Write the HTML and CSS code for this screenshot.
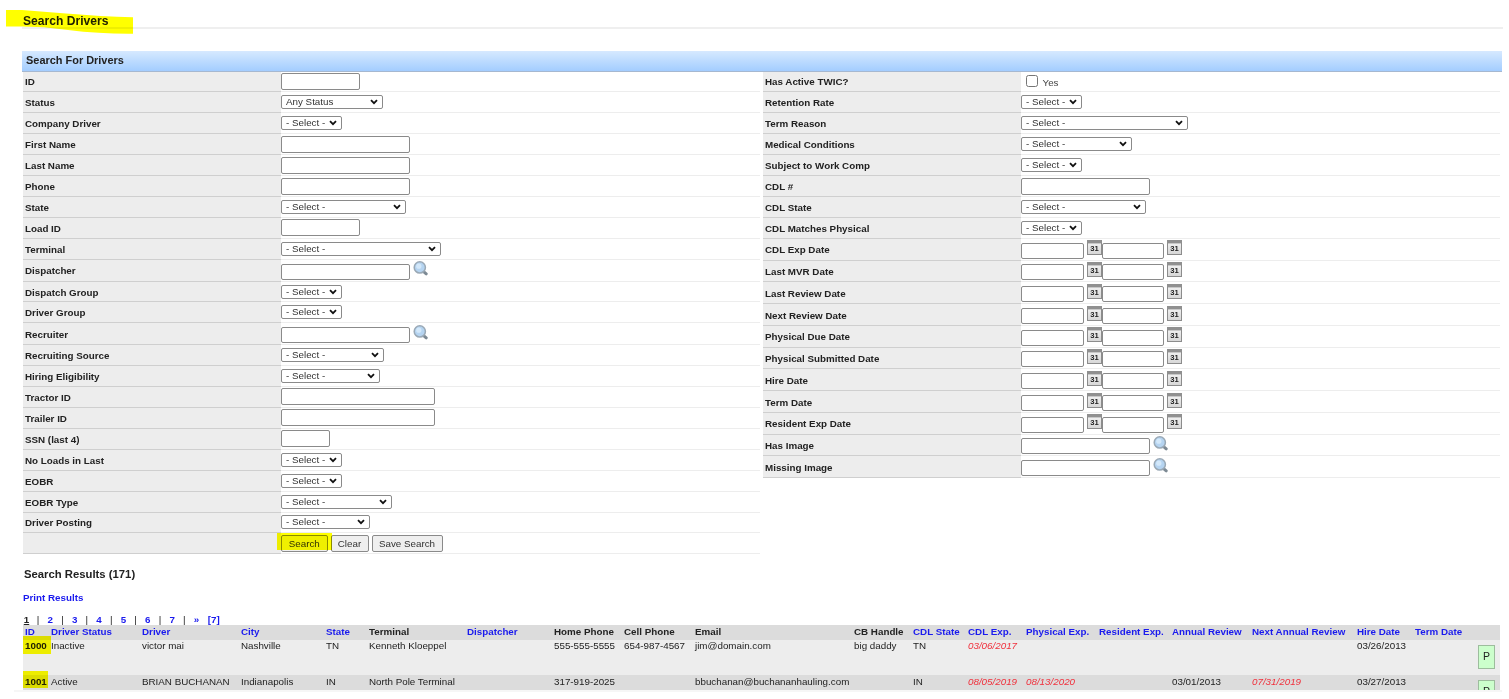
FILE: index.html
```
<!DOCTYPE html>
<html lang="en">
<head>
  <meta charset="UTF-8">
  <meta name="viewport" content="width=device-width, initial-scale=1.0">
  <title>Search Drivers</title>
  <link rel="stylesheet" href="styles.css">
</head>
<body>
  <svg class="defs" width="0" height="0">
    <defs>
      <linearGradient id="calFill" x1="0" y1="0" x2="0" y2="1">
        <stop offset="0" stop-color="#f6f6f6"/>
        <stop offset="1" stop-color="#d6d6d6"/>
      </linearGradient>
      <symbol id="lens" viewBox="0 0 15 15">
        <path d="M10.600 10.600L13.200 12.800" stroke="#7d8a94" stroke-width="3" stroke-linecap="round"/>
        <circle cx="6.800" cy="6.400" r="5.600" fill="#b5d4f1" stroke="#9aa9b6" stroke-width="1.500"/>
        <circle cx="5.800" cy="5.200" r="2.600" fill="#d3e8fa"/>
      </symbol>
      <symbol id="cal" viewBox="0 0 15 15">
        <rect x="0.5" y="0.5" width="14" height="14" fill="url(#calFill)" stroke="#8c8c8c"/>
        <rect x="0" y="0" width="15" height="3.4" fill="#909090"/>
        <text class="day" x="7.5" y="10.600" text-anchor="middle" textLength="8.500" lengthAdjust="spacingAndGlyphs">31</text>
      </symbol>
    </defs>
  </svg>

  <div class="page">
    <div class="title">
      <h1>Search Drivers</h1>
      <svg class="mark mark-title" width="128" height="26" viewBox="0 0 128 26">
        <path d="M0 0H16L60 3.5Q95 6.500 127 7.300V23.700Q95 24 62 20L38 17.300L16 16.500H0Z" fill="#ff0"/>
      </svg>
    </div>

    <div class="bar">Search For Drivers</div>

    <form class="search" onsubmit="return false">
      <div class="col left">
        <div class="row"><label>ID</label><div class="field"><input type="text" class="w-id"></div></div>
        <div class="row"><label>Status</label><div class="field"><select class="w-status"><option>Any Status</option></select></div></div>
        <div class="row"><label>Company Driver</label><div class="field"><select><option>- Select -</option></select></div></div>
        <div class="row"><label>First Name</label><div class="field"><input type="text"></div></div>
        <div class="row"><label>Last Name</label><div class="field"><input type="text"></div></div>
        <div class="row"><label>Phone</label><div class="field"><input type="text"></div></div>
        <div class="row"><label>State</label><div class="field"><select class="w-state"><option>- Select -</option></select></div></div>
        <div class="row"><label>Load ID</label><div class="field"><input type="text" class="w-id"></div></div>
        <div class="row"><label>Terminal</label><div class="field"><select class="w-terminal"><option>- Select -</option></select></div></div>
        <div class="row tall"><label>Dispatcher</label><div class="field"><input type="text"><svg class="lens"><use href="#lens"/></svg></div></div>
        <div class="row"><label>Dispatch Group</label><div class="field"><select><option>- Select -</option></select></div></div>
        <div class="row"><label>Driver Group</label><div class="field"><select><option>- Select -</option></select></div></div>
        <div class="row tall"><label>Recruiter</label><div class="field"><input type="text"><svg class="lens"><use href="#lens"/></svg></div></div>
        <div class="row"><label>Recruiting Source</label><div class="field"><select class="w-source"><option>- Select -</option></select></div></div>
        <div class="row"><label>Hiring Eligibility</label><div class="field"><select class="w-hiring"><option>- Select -</option></select></div></div>
        <div class="row"><label>Tractor ID</label><div class="field"><input type="text" class="w-unit"></div></div>
        <div class="row"><label>Trailer ID</label><div class="field"><input type="text" class="w-unit"></div></div>
        <div class="row"><label>SSN (last 4)</label><div class="field"><input type="text" class="w-ssn"></div></div>
        <div class="row"><label>No Loads in Last</label><div class="field"><select><option>- Select -</option></select></div></div>
        <div class="row"><label>EOBR</label><div class="field"><select><option>- Select -</option></select></div></div>
        <div class="row"><label>EOBR Type</label><div class="field"><select class="w-medium"><option>- Select -</option></select></div></div>
        <div class="row"><label>Driver Posting</label><div class="field"><select class="w-posting"><option>- Select -</option></select></div></div>
        <div class="row"><label></label><div class="field buttons">
          <button class="b-search">Search</button>
          <button class="b-clear">Clear</button>
          <button class="b-save">Save Search</button>
          <span class="mark mark-button"></span>
        </div></div>
      </div>

      <div class="col right">
        <div class="row"><label>Has Active TWIC?</label><div class="field"><input type="checkbox" id="twic"><span class="yes">Yes</span></div></div>
        <div class="row"><label>Retention Rate</label><div class="field"><select><option>- Select -</option></select></div></div>
        <div class="row"><label>Term Reason</label><div class="field"><select class="w-reason"><option>- Select -</option></select></div></div>
        <div class="row"><label>Medical Conditions</label><div class="field"><select class="w-medium"><option>- Select -</option></select></div></div>
        <div class="row"><label>Subject to Work Comp</label><div class="field"><select><option>- Select -</option></select></div></div>
        <div class="row"><label>CDL #</label><div class="field"><input type="text"></div></div>
        <div class="row"><label>CDL State</label><div class="field"><select class="w-state"><option>- Select -</option></select></div></div>
        <div class="row"><label>CDL Matches Physical</label><div class="field"><select><option>- Select -</option></select></div></div>
        <div class="row tall"><label>CDL Exp Date</label><div class="field dates"><input type="text"><svg class="cal"><use href="#cal"/></svg><input type="text"><svg class="cal"><use href="#cal"/></svg></div></div>
        <div class="row tall"><label>Last MVR Date</label><div class="field dates"><input type="text"><svg class="cal"><use href="#cal"/></svg><input type="text"><svg class="cal"><use href="#cal"/></svg></div></div>
        <div class="row tall"><label>Last Review Date</label><div class="field dates"><input type="text"><svg class="cal"><use href="#cal"/></svg><input type="text"><svg class="cal"><use href="#cal"/></svg></div></div>
        <div class="row tall"><label>Next Review Date</label><div class="field dates"><input type="text"><svg class="cal"><use href="#cal"/></svg><input type="text"><svg class="cal"><use href="#cal"/></svg></div></div>
        <div class="row tall"><label>Physical Due Date</label><div class="field dates"><input type="text"><svg class="cal"><use href="#cal"/></svg><input type="text"><svg class="cal"><use href="#cal"/></svg></div></div>
        <div class="row tall"><label>Physical Submitted Date</label><div class="field dates"><input type="text"><svg class="cal"><use href="#cal"/></svg><input type="text"><svg class="cal"><use href="#cal"/></svg></div></div>
        <div class="row tall"><label>Hire Date</label><div class="field dates"><input type="text"><svg class="cal"><use href="#cal"/></svg><input type="text"><svg class="cal"><use href="#cal"/></svg></div></div>
        <div class="row tall"><label>Term Date</label><div class="field dates"><input type="text"><svg class="cal"><use href="#cal"/></svg><input type="text"><svg class="cal"><use href="#cal"/></svg></div></div>
        <div class="row tall"><label>Resident Exp Date</label><div class="field dates"><input type="text"><svg class="cal"><use href="#cal"/></svg><input type="text"><svg class="cal"><use href="#cal"/></svg></div></div>
        <div class="row tall"><label>Has Image</label><div class="field"><input type="text"><svg class="lens"><use href="#lens"/></svg></div></div>
        <div class="row tall"><label>Missing Image</label><div class="field"><input type="text"><svg class="lens"><use href="#lens"/></svg></div></div>
      </div>
    </form>

    <h2>Search Results (171)</h2>
    <a class="print" href="#">Print Results</a>

    <div class="pager">
      <span class="current">1</span><i>|</i><a href="#">2</a><i>|</i><a href="#">3</a><i>|</i><a href="#">4</a><i>|</i><a href="#">5</a><i>|</i><a href="#">6</a><i>|</i><a href="#">7</a><i>|</i><a href="#">»</a><a class="last" href="#">[7]</a>
    </div>

    <div class="results">
      <table>
        <colgroup>
          <col class="c1"><col class="c2"><col class="c3"><col class="c4"><col class="c5">
          <col class="c6"><col class="c7"><col class="c8"><col class="c9"><col class="c10">
          <col class="c11"><col class="c12"><col class="c13"><col class="c14"><col class="c15">
          <col class="c16"><col class="c17"><col class="c18"><col class="c19"><col class="c20">
        </colgroup>
        <tr class="head">
          <th><a href="#">ID</a></th>
          <th><a href="#">Driver Status</a></th>
          <th><a href="#">Driver</a></th>
          <th><a href="#">City</a></th>
          <th><a href="#">State</a></th>
          <th>Terminal</th>
          <th><a href="#">Dispatcher</a></th>
          <th>Home Phone</th>
          <th>Cell Phone</th>
          <th>Email</th>
          <th>CB Handle</th>
          <th><a href="#">CDL State</a></th>
          <th><a href="#">CDL Exp.</a></th>
          <th><a href="#">Physical Exp.</a></th>
          <th><a href="#">Resident Exp.</a></th>
          <th><a href="#">Annual Review</a></th>
          <th><a href="#">Next Annual Review</a></th>
          <th><a href="#">Hire Date</a></th>
          <th><a href="#">Term Date</a></th>
          <th></th>
        </tr>
        <tr class="odd">
          <td class="id">1000<span class="mark mark-first"></span></td>
          <td>Inactive</td>
          <td>victor mai</td>
          <td>Nashville</td>
          <td>TN</td>
          <td>Kenneth Kloeppel</td>
          <td></td>
          <td>555-555-5555</td>
          <td>654-987-4567</td>
          <td>jim@domain.com</td>
          <td>big daddy</td>
          <td>TN</td>
          <td class="expired">03/06/2017</td>
          <td></td>
          <td></td>
          <td></td>
          <td></td>
          <td>03/26/2013</td>
          <td></td>
          <td><span class="p">P</span></td>
        </tr>
        <tr class="even">
          <td class="id">1001<span class="mark mark-second"></span></td>
          <td>Active</td>
          <td>BRIAN BUCHANAN</td>
          <td>Indianapolis</td>
          <td>IN</td>
          <td>North Pole Terminal</td>
          <td></td>
          <td>317-919-2025</td>
          <td></td>
          <td>bbuchanan@buchananhauling.com</td>
          <td></td>
          <td>IN</td>
          <td class="expired">08/05/2019</td>
          <td class="expired">08/13/2020</td>
          <td></td>
          <td>03/01/2013</td>
          <td class="expired">07/31/2019</td>
          <td>03/27/2013</td>
          <td></td>
          <td><span class="p">P</span></td>
        </tr>
      </table>
    </div>
    <div class="edge"></div>
  </div>
</body>
</html>
```
FILE: styles.css
```
* {
  box-sizing: border-box;
}

body {
  margin: 0;
  background: #fff;
  font-family: "Liberation Sans", Arial, sans-serif;
  font-size: 9.8px;
  color: #222;
  overflow: hidden;
}

.defs {
  position: absolute;
}

.page {
  width: 1509px;
  height: 699px;
  overflow: hidden;
}

a {
  color: #1a1aee;
  text-decoration: none;
}

/* yellow marker */
.mark {
  position: absolute;
  background: #ff0;
  mix-blend-mode: multiply;
  pointer-events: none;
}

.title {
  position: relative;
  height: 29px;
  margin: 0 6px 0 22px;
  padding: 14px 0 0 1px;
  border-bottom: 2px solid #efefef;
}

.title h1 {
  margin: 0;
  font-size: 12.1px;
  line-height: 15px;
}

.mark-title {
  left: -16px;
  top: 10px;
  background: none;
}

.bar {
  height: 21px;
  margin: 21.5px 7px 0 22px;
  padding-left: 4px;
  font-size: 10.95px;
  font-weight: bold;
  line-height: 19px;
  background: linear-gradient(#d6e9ff, #a3cdff);
  border-bottom: 1px solid #a6b8d0;
}

/* search form */
.search {
  display: flex;
  gap: 3px;
  margin-left: 23px;
  height: 484px;
}

.left,
.right {
  width: 737px;
}

.row {
  display: flex;
  height: 20.93px;
}

.tall {
  height: 21.75px;
}

.row label {
  width: 257.500px;
  padding: 1px 0 0 2px;
  display: flex;
  align-items: center;
  font-weight: bold;
  background: #ededed;
  border-bottom: 1px solid #cfcfcf;
}

.field {
  flex: 1;
  display: flex;
  align-items: center;
  padding-left: 0.5px;
  border-bottom: 1px solid #ededed;
}

.tall .field {
  align-items: flex-end;
  padding-bottom: 1px;
}

input[type="text"],
select,
button {
  font: inherit;
  margin: 0;
  border: 1px solid #8a8a8a;
  border-radius: 2px;
}

input[type="text"] {
  width: 129px;
  height: 17px;
  padding: 0 2px;
  background: #fff;
}

.tall input[type="text"] {
  height: 16px;
}

select {
  -webkit-appearance: none;
  appearance: none;
  width: 60.500px;
  height: 14px;
  padding: 0 0 0 4px;
  line-height: 12px;
  color: #333;
  background: #fff url("data:image/svg+xml,%3Csvg xmlns='http://www.w3.org/2000/svg' width='8' height='6'%3E%3Cpath d='M1 1.2L4 4.2L7 1.200' fill='none' stroke='%23111' stroke-width='1.8'/%3E%3C/svg%3E") no-repeat right 4px center;
}

.field .w-id { width: 79px; }
.field .w-status { width: 102px; }
.field .w-state { width: 125px; }
.field .w-terminal { width: 160px; }
.field .w-source { width: 103px; }
.field .w-hiring { width: 99px; }
.field .w-unit { width: 154px; }
.field .w-ssn { width: 49px; }
.field .w-medium { width: 111px; }
.field .w-posting { width: 89px; }
.field .w-reason { width: 167px; }

input[type="checkbox"] {
  width: 12px;
  height: 12px;
  margin: 0 5px 1px 4.500px;
}

.yes {
  padding-top: 3px;
  color: #444;
}

.lens,
.cal {
  width: 15px;
  height: 15px;
  align-self: flex-start;
  margin: 1.500px 0 0 3px;
}

.dates input[type="text"] {
  width: 62.500px;
}

.day {
  font: bold 7px "Liberation Sans", Arial, sans-serif;
  fill: #222;
}

.buttons {
  position: relative;
  gap: 3px;
}

button {
  height: 17px;
  padding: 0;
  color: #333;
  background: #efefef;
}

.b-search { width: 46.500px; }
.b-clear { width: 38px; }
.b-save { width: 71px; }

.mark-button {
  left: -4px;
  top: 0;
  width: 55px;
  height: 17px;
}

/* results */
h2 {
  margin: 11px 0 0 24px;
  font-size: 11.3px;
  line-height: 15px;
}

.print {
  display: block;
  margin: 10px 0 0 23px;
  font-weight: bold;
  line-height: 12px;
}

.pager {
  display: flex;
  margin: 10px 0 0 23px;
  height: 11px;
  line-height: 12px;
  font-weight: bold;
}

.pager > * {
  width: 12.200px;
  text-align: center;
  font-style: normal;
  font-weight: normal;
}

.pager a,
.pager .current {
  font-weight: bold;
}

.pager .current {
  width: 7px;
  margin-right: 2px;
  text-decoration: underline;
}

.pager .last {
  margin-left: 5px;
}

.results {
  height: 65.500px;
  margin-left: 23px;
  overflow: hidden;
}

.results table {
  width: 1477px;
  table-layout: fixed;
  border-collapse: collapse;
}

.c1 { width: 27px; }
.c2 { width: 91px; }
.c3 { width: 99px; }
.c4 { width: 85px; }
.c5 { width: 43px; }
.c6 { width: 98px; }
.c7 { width: 87px; }
.c8 { width: 70px; }
.c9 { width: 71px; }
.c10 { width: 159px; }
.c11 { width: 59px; }
.c12 { width: 55px; }
.c13 { width: 58px; }
.c14 { width: 73px; }
.c15 { width: 73px; }
.c16 { width: 80px; }
.c17 { width: 105px; }
.c18 { width: 58px; }
.c19 { width: 63px; }
.c20 { width: 23px; }

th,
td {
  padding: 1px 0 0 1px;
  line-height: 12px;
  text-align: left;
  vertical-align: top;
  white-space: nowrap;
}

.head {
  height: 15px;
  background: #dcdcdc;
}

.head th:first-child,
.id {
  padding-left: 2px;
}

.odd,
.even {
  height: 35px;
}

.odd {
  background: #ededed;
}

.odd td {
  padding-top: 0;
}

.even {
  background: #dcdcdc;
}

.id {
  position: relative;
  font-weight: bold;
}

.expired {
  color: #f0303c;
  font-style: italic;
}

.p {
  display: block;
  width: 17px;
  height: 24px;
  margin-top: 5px;
  line-height: 21px;
  font-size: 10.500px;
  text-align: center;
  background: #cfc;
  border: 1px solid #9dbd9d;
}

.even .p {
  margin-top: 4px;
}

.mark-first {
  left: -1px;
  top: -4px;
  width: 29px;
  height: 18px;
}

.mark-second {
  left: -3px;
  top: -4px;
  width: 28px;
  height: 17px;
}

.edge {
  height: 2px;
  margin: 0 7px 0 14px;
  background: #f6f6f6;
}
```
